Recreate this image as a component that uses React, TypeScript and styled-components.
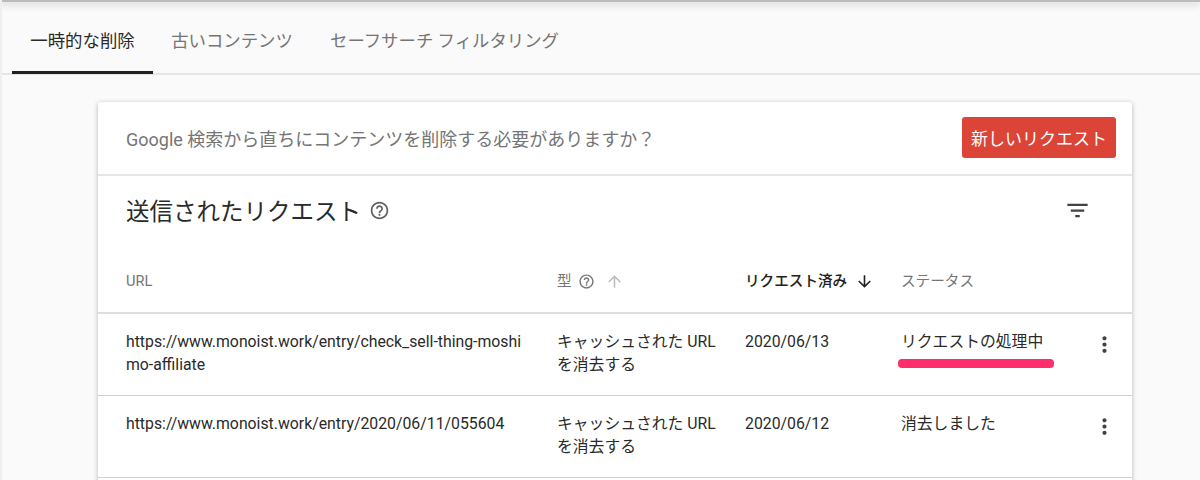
import React from "react";
import styled, { createGlobalStyle } from "styled-components";

const GlobalStyle = createGlobalStyle`
  html, body {
    margin: 0;
    padding: 0;
    height: 100%;
    overflow: hidden;
    background: #fafafa;
    font-family: Roboto, "Noto Sans CJK JP", sans-serif;
  }
`;

const Page = styled.div`
  position: relative;
  width: 1200px;
  height: 480px;
  overflow: hidden;
  box-sizing: border-box;
  border-left: 2px solid #efefef;
  background: #fafafa;
`;

const TopShadow = styled.div`
  height: 2px;
  margin-left: -2px;
  background: #bcbcbc;
  box-shadow: 0 2px 7px rgba(0, 0, 0, 0.32);
`;

const Tabs = styled.nav`
  display: flex;
  height: 73px;
  box-sizing: border-box;
  margin-left: -2px;
  padding-left: 12px;
  border-bottom: 2px solid #e6e6e6;
`;

const Tab = styled.div<{ $active?: boolean; $width: number }>`
  width: ${(p) => p.$width}px;
  box-sizing: border-box;
  display: flex;
  align-items: center;
  justify-content: center;
  font-size: 17.4px;
  padding-top: 5px;
  color: ${(p) => (p.$active ? "#2a2a2a" : "#757575")};
  border-bottom: 3px solid ${(p) => (p.$active ? "#202124" : "transparent")};
  margin-bottom: -1px;
  white-space: nowrap;
`;

const Content = styled.div`
  padding: 27px 0 0 96px;
`;

const Card = styled.section`
  width: 1034px;
  height: 400px;
  background: #fff;
  border-radius: 3px 3px 0 0;
  box-shadow: 0 1px 5px rgba(0, 0, 0, 0.28);
`;

const Banner = styled.div`
  height: 74px;
  box-sizing: border-box;
  display: flex;
  align-items: center;
  justify-content: space-between;
  padding: 0 16px 1px 28px;
  border-bottom: 2px solid #e6e6e6;
`;

const BannerText = styled.div`
  font-size: 18px;
  color: #757575;
`;

const NewButton = styled.button`
  width: 154px;
  height: 41px;
  padding: 0;
  border: none;
  border-radius: 3px;
  background: #db4437;
  color: #fff;
  font: inherit;
  font-size: 17px;
`;

const TitleRow = styled.div`
  height: 70px;
  box-sizing: border-box;
  display: flex;
  align-items: center;
  justify-content: space-between;
  padding: 0 41px 2px 28px;
`;

const Title = styled.h2`
  display: flex;
  align-items: center;
  gap: 8px;
  margin: 0;
  font-size: 23.5px;
  font-weight: 400;
  color: #2a2a2a;
`;

const Row = styled.div<{ $head?: boolean }>`
  position: relative;
  display: grid;
  grid-template-columns: 431px 188px 156px 1fr 40px;
  box-sizing: border-box;
  height: ${(p) => (p.$head ? "68px" : "82px")};
  padding-left: 28px;
  align-items: ${(p) => (p.$head ? "center" : "start")};
  padding-top: ${(p) => (p.$head ? "4px" : "16px")};
  border-bottom: ${(p) => (p.$head ? "2px solid #dedede" : "1px solid #d0d0d0")};
  font-size: ${(p) => (p.$head ? "14.6px" : "15.8px")};
  line-height: 23px;
  color: #2a2a2a;
`;

const HeadCell = styled.div<{ $sorted?: boolean }>`
  display: flex;
  align-items: center;
  gap: 6px;
  color: ${(p) => (p.$sorted ? "#212121" : "#757575")};
  font-weight: ${(p) => (p.$sorted ? 500 : 400)};
`;

const UrlCell = styled.div`
  width: 400px;
  word-break: break-all;
`;

const TypeCell = styled.div`
  width: 170px;
`;

const MoreCell = styled.div`
  display: flex;
  justify-content: flex-start;
  padding-top: 2px;
`;

const Marker = styled.div`
  position: absolute;
  left: 800px;
  top: 45px;
  width: 156px;
  height: 8.5px;
  border-radius: 4px;
  background: #ff2d6b;
`;

const ArrowSvg = styled.svg<{ $down?: boolean }>`
  margin-left: ${(p) => (p.$down ? "2px" : "4px")};
  transform: ${(p) => (p.$down ? "rotate(180deg)" : "none")};
`;

const Help = ({ size, color }: { size: number; color: string }) => (
  <svg width={size} height={size} viewBox="0 0 24 24" fill={color}>
    <path d="M11 18h2v-2h-2v2zm1-16C6.48 2 2 6.48 2 12s4.48 10 10 10 10-4.48 10-10S17.52 2 12 2zm0 18c-4.41 0-8-3.59-8-8s3.59-8 8-8 8 3.59 8 8-3.59 8-8 8zm0-14c-2.21 0-4 1.79-4 4h2c0-1.1.9-2 2-2s2 .9 2 2c0 2-3 1.75-3 5h2c0-2.25 3-2.5 3-5 0-2.21-1.79-4-4-4z" />
  </svg>
);

const FilterIcon = () => (
  <svg width="27" height="27" viewBox="0 0 24 24" fill="#424242">
    <path d="M10 18h4v-2h-4v2zM3 6v2h18V6H3zm3 7h12v-2H6v2z" />
  </svg>
);

const Arrow = ({ down, color }: { down?: boolean; color: string }) => (
  <ArrowSvg $down={down} width="19" height="19" viewBox="0 0 24 24" fill={color}>
    <path d="M4 12l1.41 1.41L11 7.83V20h2V7.83l5.58 5.59L20 12l-8-8-8 8z" />
  </ArrowSvg>
);

const MoreIcon = () => (
  <svg width="25" height="25" viewBox="0 0 24 24" fill="#424242">
    <path d="M12 8c1.1 0 2-.9 2-2s-.9-2-2-2-2 .9-2 2 .9 2 2 2zm0 2c-1.1 0-2 .9-2 2s.9 2 2 2 2-.9 2-2-.9-2-2-2zm0 6c-1.1 0-2 .9-2 2s.9 2 2 2 2-.9 2-2-.9-2-2-2z" />
  </svg>
);

const rows = [
  {
    url: "https://www.monoist.work/entry/check_sell-thing-moshimo-affiliate",
    date: "2020/06/13",
    status: "リクエストの処理中",
    marked: true,
  },
  {
    url: "https://www.monoist.work/entry/2020/06/11/055604",
    date: "2020/06/12",
    status: "消去しました",
    marked: false,
  },
];

export default function App() {
  return (
    <Page>
      <GlobalStyle />
      <TopShadow />
      <Tabs>
        <Tab $active $width={141}>一時的な削除</Tab>
        <Tab $width={158}>古いコンテンツ</Tab>
        <Tab $width={267}>セーフサーチ フィルタリング</Tab>
      </Tabs>
      <Content>
        <Card>
          <Banner>
            <BannerText>Google 検索から直ちにコンテンツを削除する必要がありますか？</BannerText>
            <NewButton>新しいリクエスト</NewButton>
          </Banner>
          <TitleRow>
            <Title>
              送信されたリクエスト
              <Help size={21} color="#616161" />
            </Title>
            <FilterIcon />
          </TitleRow>
          <Row $head>
            <HeadCell>URL</HeadCell>
            <HeadCell>
              型 <Help size={17} color="#757575" />
              <Arrow color="#bdbdbd" />
            </HeadCell>
            <HeadCell $sorted>
              リクエスト済み <Arrow down color="#212121" />
            </HeadCell>
            <HeadCell>ステータス</HeadCell>
          </Row>
          {rows.map((r) => (
            <Row key={r.url}>
              <UrlCell>{r.url}</UrlCell>
              <TypeCell>キャッシュされた URL を消去する</TypeCell>
              <div>{r.date}</div>
              <div>{r.status}</div>
              <MoreCell>
                <MoreIcon />
              </MoreCell>
              {r.marked && <Marker />}
            </Row>
          ))}
        </Card>
      </Content>
    </Page>
  );
}
